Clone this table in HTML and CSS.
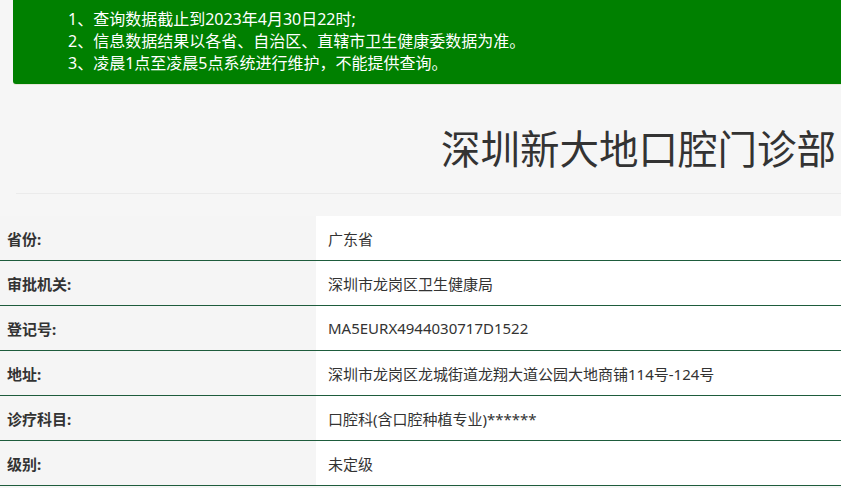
FILE: index.html
```html
<!DOCTYPE html>
<html lang="zh-CN">
<head>
<meta charset="utf-8">
<title>深圳新大地口腔门诊部</title>
<link rel="stylesheet" href="styles.css">
</head>
<body>
<div class="notice">
  <p>1、查询数据截止到2023年4月30日22时;</p>
  <p>2、信息数据结果以各省、自治区、直辖市卫生健康委数据为准。</p>
  <p>3、凌晨1点至凌晨5点系统进行维护，不能提供查询。</p>
</div>
<h1 class="title">深圳新大地口腔门诊部</h1>
<div class="rule"></div>
<div class="info">
  <div class="row"><div class="label">省份:</div><div class="value">广东省</div></div>
  <div class="row"><div class="label">审批机关:</div><div class="value">深圳市龙岗区卫生健康局</div></div>
  <div class="row"><div class="label">登记号:</div><div class="value">MA5EURX4944030717D1522</div></div>
  <div class="row"><div class="label">地址:</div><div class="value">深圳市龙岗区龙城街道龙翔大道公园大地商铺114号-124号</div></div>
  <div class="row"><div class="label">诊疗科目:</div><div class="value">口腔科(含口腔种植专业)******</div></div>
  <div class="row"><div class="label">级别:</div><div class="value">未定级</div></div>
</div>
</body>
</html>
```

FILE: styles.css
```css
html, body {
  margin: 0;
  padding: 0;
}
body {
  background: #f6f6f6;
  font-family: "Noto Sans", "Noto Sans CJK SC", sans-serif;
  color: #333;
  overflow: hidden;
}
.notice {
  margin-left: 13px;
  background: #008000;
  color: #fff;
  font-size: 16px;
  line-height: 22px;
  padding: 8px 0 10px 55px;
  border-bottom-left-radius: 3px;
  box-shadow: 0 1px 0 #e6e6d8;
}
.notice p {
  margin: 0;
}
.title {
  margin: 43px 0 0 0;
  font-size: 39.5px;
  line-height: 44px;
  font-weight: normal;
  color: #333;
  text-align: right;
  padding-right: 5px;
  white-space: nowrap;
}
.rule {
  margin: 22px 0 0 16px;
  border-top: 1px solid #ebebeb;
  height: 0;
}
.info {
  margin-top: 22px;
}
.row {
  display: flex;
  height: 44px;
  border-bottom: 1px solid #1e5c3c;
  font-size: 15px;
}
.label {
  width: 316px;
  flex: none;
  padding-left: 7px;
  box-sizing: border-box;
  display: flex;
  align-items: center;
  font-weight: bold;
  color: #333;
  background: #f5f5f5;
}
.value {
  flex: 1;
  background: #fff;
  padding-left: 12px;
  display: flex;
  align-items: center;
  color: #333;
  white-space: nowrap;
}
```
